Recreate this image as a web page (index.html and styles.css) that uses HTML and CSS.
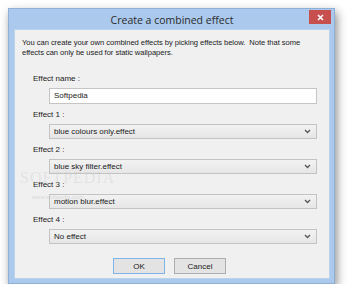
FILE: index.html
```html
<!DOCTYPE html>
<html>
<head>
<meta charset="utf-8">
<link rel="stylesheet" href="styles.css">
</head>
<body>
<div class="window">
  <div class="titlebar">
    <span class="title">Create a combined effect</span>
    <button class="close" aria-label="Close">
      <svg width="7" height="7" viewBox="0 0 7 7"><path d="M1 1L6 6M6 1L1 6" stroke="#fff" stroke-width="1.6"/></svg>
    </button>
  </div>
  <div class="content">
    <p class="intro">You can create your own combined effects by picking effects below.&nbsp; Note that some effects can only be used for static wallpapers.</p>
    <div class="field">
      <div class="label">Effect name :</div>
      <div class="input">Softpedia</div>
    </div>
    <div class="field">
      <div class="label">Effect 1 :</div>
      <div class="select"><span>blue colours only.effect</span><svg class="chev" width="7" height="5" viewBox="0 0 7 5"><path d="M1 1L3.5 3.5L6 1" fill="none" stroke="#555" stroke-width="1.3"/></svg></div>
    </div>
    <div class="field">
      <div class="label">Effect 2 :</div>
      <div class="select"><span>blue sky filter.effect</span><svg class="chev" width="7" height="5" viewBox="0 0 7 5"><path d="M1 1L3.5 3.5L6 1" fill="none" stroke="#555" stroke-width="1.3"/></svg></div>
    </div>
    <div class="field">
      <div class="label wm-host">Effect 3 :<span class="watermark">SOFTPEDIA</span><span class="watermark-url">www.softpedia.com</span></div>
      <div class="select"><span>motion blur.effect</span><svg class="chev" width="7" height="5" viewBox="0 0 7 5"><path d="M1 1L3.5 3.5L6 1" fill="none" stroke="#555" stroke-width="1.3"/></svg></div>
    </div>
    <div class="field">
      <div class="label">Effect 4 :</div>
      <div class="select"><span>No effect</span><svg class="chev" width="7" height="5" viewBox="0 0 7 5"><path d="M1 1L3.5 3.5L6 1" fill="none" stroke="#555" stroke-width="1.3"/></svg></div>
    </div>
    <div class="buttons">
      <button class="btn default">OK</button>
      <button class="btn">Cancel</button>
    </div>
  </div>
</div>
</body>
</html>
```
FILE: styles.css
```css
html, body {
  margin: 0;
  padding: 0;
  background: #ffffff;
}
body {
  font-family: "Liberation Sans", Arial, sans-serif;
  color: #1a1a1a;
}
.window {
  margin: 8px 0 0 8px;
  width: 327px;
  height: 276px;
  box-sizing: border-box;
  background: #aac9ec;
  border: 1px solid #8fb0d6;
  padding: 0 4px 4px 5px;
  display: flex;
  flex-direction: column;
  box-shadow: 2px 4px 9px rgba(0, 0, 0, 0.45);
}
.titlebar {
  height: 20px;
  flex: none;
  position: relative;
  display: flex;
  align-items: center;
  justify-content: center;
}
.title {
  font-family: "Open Sans", "Liberation Sans", sans-serif;
  font-size: 10.5px;
  color: #2b2b2b;
  margin-top: 2px;
}
.close {
  position: absolute;
  right: -1px;
  top: 1px;
  width: 22px;
  height: 14px;
  border: 0;
  padding: 0;
  background: #c7504f;
  display: flex;
  align-items: center;
  justify-content: center;
}
.content {
  flex: 1;
  background: #f0f0f0;
  border: 1px solid #bcd3ec;
  padding: 8px 12px 0 7px;
  display: flex;
  flex-direction: column;
  font-size: 8px;
}
.intro {
  margin: 0 -4px 0 0;
  line-height: 10px;
  font-size: 7.6px;
  letter-spacing: -0.05px;
}
.field {
  display: flex;
  flex-direction: column;
}
.label {
  margin: 6px 0 4px 11px;
  line-height: 10px;
  height: 10px;
}
.field:first-of-type .label {
  margin-top: 16px;
}
.input {
  margin-left: 27px;
  height: 16px;
  box-sizing: border-box;
  background: #ffffff;
  border: 1px solid #c5c5c5;
  padding: 0 4px;
  line-height: 14px;
}
.select {
  margin-left: 27px;
  height: 15px;
  box-sizing: border-box;
  background: linear-gradient(#f2f2f2, #e6e6e6);
  border: 1px solid #c3c3c3;
  padding: 0 5px 0 4px;
  display: flex;
  align-items: center;
  justify-content: space-between;
}
.chev {
  display: block;
}
.wm-host {
  position: relative;
}
.watermark {
  position: absolute;
  left: -13px;
  top: -7px;
  font-family: "Liberation Serif", serif;
  font-size: 16px;
  letter-spacing: 1px;
  color: rgba(200, 200, 200, 0.35);
  pointer-events: none;
}
.watermark-url {
  position: absolute;
  left: -1px;
  top: 12px;
  font-size: 6px;
  color: rgba(190, 190, 190, 0.5);
}
.buttons {
  display: flex;
  justify-content: center;
  gap: 9px;
  margin-top: 14px;
}
.btn {
  width: 52px;
  height: 16px;
  box-sizing: border-box;
  padding: 0;
  font-family: "Liberation Sans", Arial, sans-serif;
  font-size: 8px;
  color: #1a1a1a;
  background: #e3e3e3;
  border: 1px solid #adadad;
}
.btn.default {
  border-color: #7fb4ea;
}
```
